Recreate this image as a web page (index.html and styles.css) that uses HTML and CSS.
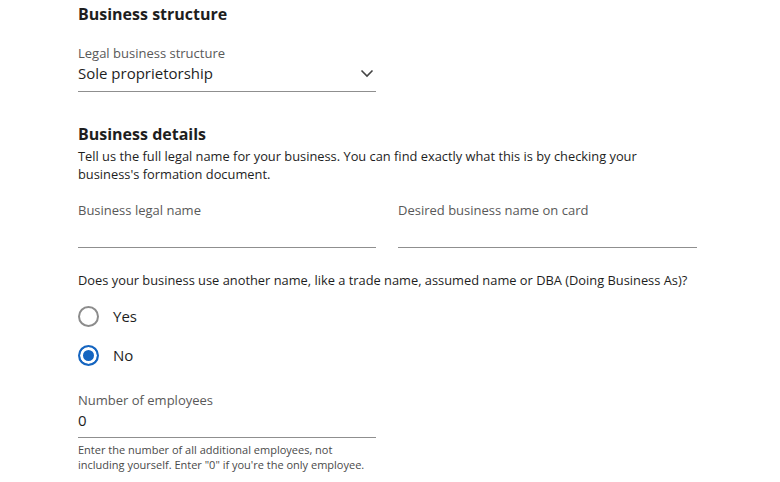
FILE: index.html
```html
<!DOCTYPE html>
<html lang="en">
<head>
    <meta charset="UTF-8">
    <meta name="viewport" content="width=device-width, initial-scale=1.0">
    <title>Business Information</title>
<link rel="stylesheet" href="styles.css">
</head>
<body>

    <form class="app-form">
        <section class="block">
            <h2>Business structure</h2>
            <div class="field field-select">
                <span class="field-label">Legal business structure</span>
                <div class="field-value">
                    <span>Sole proprietorship</span>
                    <svg class="chevron" width="14" height="9" viewBox="0 0 14 9">
                        <path d="M1.5 1.5 L7 7 L12.5 1.5" fill="none" stroke="#444" stroke-width="1.6"/>
                    </svg>
                </div>
            </div>
        </section>

        <section class="block details">
            <h2>Business details</h2>
            <p class="intro">Tell us the full legal name for your business. You can find exactly what this is by checking your business's formation document.</p>

            <div class="field-row">
                <div class="field field-text">
                    <span class="field-label">Business legal name</span>
                    <div class="field-value"></div>
                </div>
                <div class="field field-text">
                    <span class="field-label">Desired business name on card</span>
                    <div class="field-value"></div>
                </div>
            </div>

            <p class="question">Does your business use another name, like a trade name, assumed name or DBA (Doing Business As)?</p>

            <div class="radio-group">
                <label class="radio">
                    <span class="radio-dot"></span>
                    <span>Yes</span>
                </label>
                <label class="radio checked">
                    <span class="radio-dot"></span>
                    <span>No</span>
                </label>
            </div>

            <div class="field field-number">
                <span class="field-label">Number of employees</span>
                <div class="field-value"><span>0</span></div>
                <p class="help">Enter the number of all additional employees, not including yourself. Enter "0" if you're the only employee.</p>
            </div>
        </section>
    </form>

</body>
</html>
```

FILE: styles.css
```css
/* Basic reset */
* {
    margin: 0;
    padding: 0;
    box-sizing: border-box;
}

body {
    font-family: "Open Sans", Arial, sans-serif;
    background-color: #fff;
    color: #1e1e1e;
}

.app-form {
    padding: 2px 0 0 78px;
    width: 720px;
}

h2 {
    font-size: 16px;
    font-weight: 700;
    line-height: 24px;
}

.field {
    width: 298px;
}

.field-label {
    display: block;
    font-size: 13px;
    line-height: 18px;
    color: #595959;
}

.field-value {
    display: flex;
    justify-content: space-between;
    align-items: flex-start;
    font-size: 15px;
    line-height: 23px;
    border-bottom: 1px solid #8f8f8f;
}

.field-select {
    margin-top: 18px;
}

.field-select .field-value {
    height: 30px;
}

.chevron {
    margin: 7px 2px 0 0;
}

.details {
    margin-top: 30px;
}

.intro {
    font-size: 12.85px;
    line-height: 18px;
    padding-top: 1px;
    width: 600px;
}

.field-row {
    display: flex;
    gap: 22px;
    margin-top: 18px;
}

.field-row .field {
    flex: 0 0 298px;
}

.field-row .field:last-child {
    flex-basis: 299px;
}

.field-text .field-value {
    height: 29px;
}

.question {
    font-size: 12.85px;
    line-height: 18px;
    margin-top: 23px;
}

.radio-group {
    display: flex;
    flex-direction: column;
    gap: 17px;
    margin-top: 16px;
}

.radio {
    display: flex;
    align-items: center;
    gap: 14px;
    font-size: 15px;
    line-height: 22px;
}

.radio-dot {
    width: 21px;
    height: 21px;
    border-radius: 50%;
    border: 2px solid #8c8c8c;
    background-color: #fff;
}

.radio.checked .radio-dot {
    border-color: #1565c0;
    box-shadow: inset 0 0 0 3px #fff;
    background-color: #1565c0;
}

.field-number {
    margin-top: 25px;
}

.field-number .field-value {
    height: 29px;
}

.help {
    font-size: 11px;
    line-height: 15px;
    color: #4a4a4a;
    margin-top: 4px;
    width: 298px;
}
```
